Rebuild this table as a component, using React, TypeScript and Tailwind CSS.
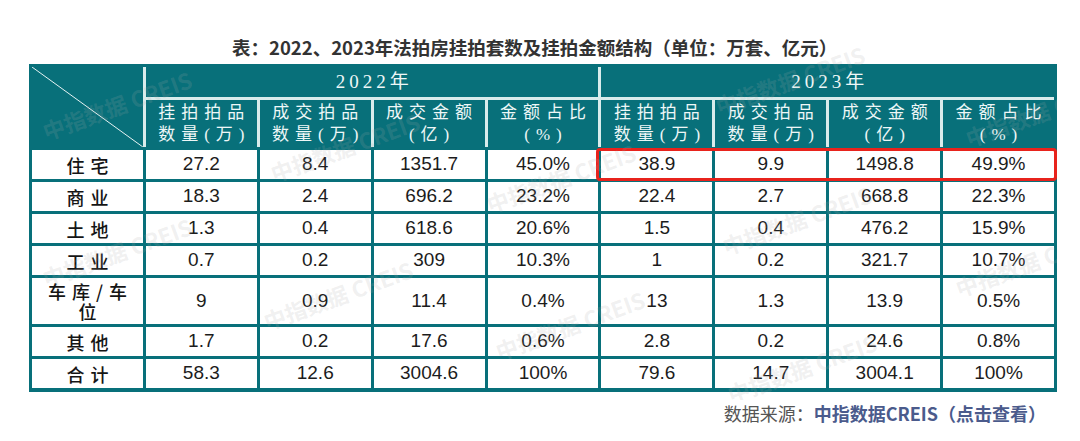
import React from "react";

const rows: { label: string[]; vals: string[]; tall?: boolean }[] = [
  { label: ["住宅"], vals: ["27.2", "8.4", "1351.7", "45.0%", "38.9", "9.9", "1498.8", "49.9%"] },
  { label: ["商业"], vals: ["18.3", "2.4", "696.2", "23.2%", "22.4", "2.7", "668.8", "22.3%"] },
  { label: ["土地"], vals: ["1.3", "0.4", "618.6", "20.6%", "1.5", "0.4", "476.2", "15.9%"] },
  { label: ["工业"], vals: ["0.7", "0.2", "309", "10.3%", "1", "0.2", "321.7", "10.7%"] },
  { label: ["车库/车", "位"], vals: ["9", "0.9", "11.4", "0.4%", "13", "1.3", "13.9", "0.5%"], tall: true },
  { label: ["其他"], vals: ["1.7", "0.2", "17.6", "0.6%", "2.8", "0.2", "24.6", "0.8%"] },
  { label: ["合计"], vals: ["58.3", "12.6", "3004.6", "100%", "79.6", "14.7", "3004.1", "100%"] },
];

const subHeads: string[][] = [
  ["挂拍拍品", "数量(万)"],
  ["成交拍品", "数量(万)"],
  ["成交金额", "(亿)"],
  ["金额占比", "(%)"],
];

const watermarks = [
  "left-[117px] top-[105px]",
  "left-[345px] top-[147px]",
  "left-[117px] top-[252px]",
  "left-[338px] top-[295px]",
  "left-[797px] top-[220px]",
  "left-[802px] top-[368px]",
  "left-[570px] top-[325px]",
  "left-[561px] top-[178px]",
  "left-[790px] top-[80px]",
  "left-[1040px] top-[112px]",
  "left-[1030px] top-[262px]",
];

const cjk = "font-['Noto_Sans_CJK_SC',sans-serif]";
const serifCjk = "font-['Liberation_Serif','Noto_Sans_CJK_SC',serif]";

function SubHead({ lines }: { lines: string[] }) {
  return (
    <div className={`bg-[#08707a] h-[47px] flex flex-col items-center justify-center text-[17px] leading-[22px] text-[#eef7f7] ${serifCjk}`}>
      {lines.map((l, i) => (
        <div key={i} className="tracking-[6px] pl-[6px] whitespace-nowrap">
          {l}
        </div>
      ))}
    </div>
  );
}

export default function App() {
  return (
    <div className="relative w-[1080px] h-[441px] bg-white overflow-hidden">
      {/* Title */}
      <div className="pt-[34px] pl-[232px] h-[64px]">
        <div className={`text-[18.5px] leading-[26px] font-bold text-[#333333] whitespace-nowrap ${cjk}`}>
          表：2022、2023年法拍房挂拍套数及挂拍金额结构（单位：万套、亿元）
        </div>
      </div>

      {/* Table */}
      <div className="ml-[29px] w-[1028px] bg-[#08707a] pt-[3px] px-[3px] pb-[4px] flex flex-col gap-[3px]">
        {/* Header */}
        <div className="grid grid-cols-9 gap-[3px] bg-[#d9ecec]">
          <div className="row-span-2 bg-[#08707a] relative">
            <svg className="absolute inset-0 w-full h-full" preserveAspectRatio="none" viewBox="0 0 100 100">
              <line x1="0" y1="0" x2="100" y2="100" stroke="#e6f3f3" strokeWidth="1" vectorEffect="non-scaling-stroke" />
            </svg>
          </div>
          <div className={`col-span-4 bg-[#08707a] h-[30px] flex items-center justify-center text-[19px] text-[#eef7f7] tracking-[4px] pl-[4px] ${serifCjk}`}>
            2022年
          </div>
          <div className={`col-span-4 bg-[#08707a] h-[30px] flex items-center justify-center text-[19px] text-[#eef7f7] tracking-[4px] pl-[4px] ${serifCjk}`}>
            2023年
          </div>
          {[...subHeads, ...subHeads].map((s, i) => (
            <SubHead key={i} lines={s} />
          ))}
        </div>

        {/* Body */}
        <div className="grid grid-cols-9 gap-[3px]">
          {rows.map((r, ri) => (
            <React.Fragment key={ri}>
              <div
                className={`bg-white flex flex-col items-center justify-center ${r.tall ? "h-[46px]" : "h-[29px]"} text-[18px] leading-[20px] font-medium text-[#151515] ${cjk}`}
              >
                {r.label.map((l, li) => (
                  <div key={li} className="tracking-[6px] pl-[6px] whitespace-nowrap">
                    {l}
                  </div>
                ))}
              </div>
              {r.vals.map((v, vi) => (
                <div
                  key={vi}
                  className={`bg-white flex items-center justify-center ${r.tall ? "h-[46px]" : "h-[29px]"} text-[19px] text-[#1c1c1c] font-['Liberation_Sans',Arial,sans-serif]`}
                >
                  {v}
                </div>
              ))}
            </React.Fragment>
          ))}
        </div>
      </div>

      {/* Footer */}
      <div className={`mt-[10px] pr-[34px] flex justify-end text-[18px] leading-[22px] whitespace-nowrap ${cjk}`}>
        <span className="text-[#555555]">数据来源：</span>
        <span className="text-[#4b5b8c] font-bold">中指数据CREIS（点击查看）</span>
      </div>

      {/* Highlight box */}
      <div className="absolute left-[596px] top-[148px] w-[461px] h-[33px] border-[3px] border-[#e8231c] rounded-[4px] pointer-events-none" />

      {/* Watermarks */}
      <div className="absolute left-0 top-0 w-[1057px] h-[400px] overflow-hidden pointer-events-none">
        {watermarks.map((w, i) => (
          <div
            key={i}
            className={`absolute ${w} -translate-x-1/2 -translate-y-1/2 rotate-[-20deg] text-[22px] font-bold whitespace-nowrap text-[rgba(170,170,170,0.18)] ${cjk}`}
          >
            中指数据 CREIS
          </div>
        ))}
      </div>
    </div>
  );
}
